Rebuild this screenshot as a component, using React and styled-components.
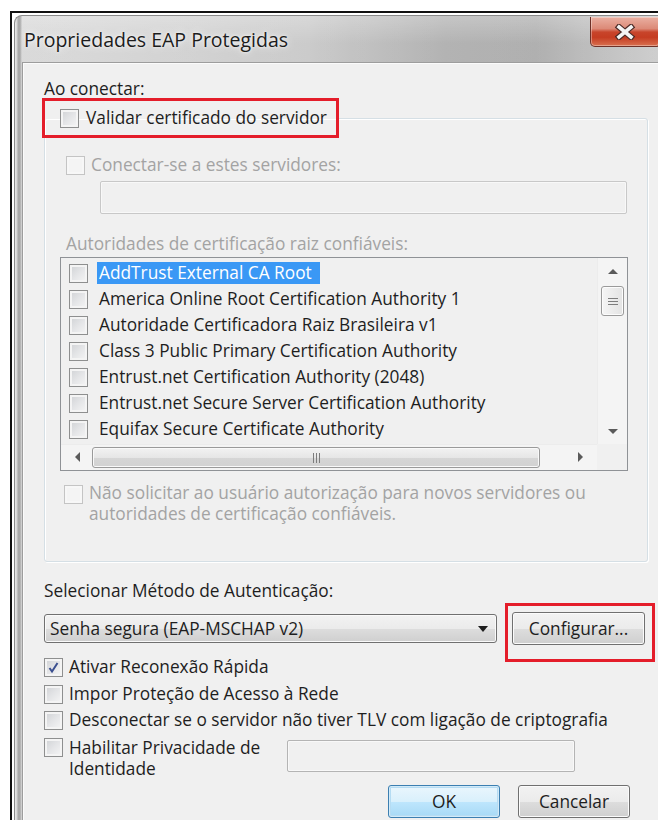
import React from 'react';
import styled, { createGlobalStyle } from 'styled-components';

const Global = createGlobalStyle`
  html, body { margin: 0; padding: 0; background: #fff; overflow: hidden; }
  * { box-sizing: border-box; }
`;

const FONT = `"Segoe UI", "Open Sans", "Noto Sans", sans-serif`;
const SIZE = '17.3px';

const Page = styled.div`
  width: 658px;
  height: 820px;
  overflow: hidden;
  background: #fff;
  padding: 11px 0 0 10px;
  font-family: ${FONT};
`;

const Frame = styled.div`
  width: 680px;
  height: 840px;
  border-left: 2px solid #111;
  border-top: 2px solid #111;
  padding: 2px 0 0 2px;
  background: #fff;
`;

const Window = styled.div`
  width: 652px;
  height: 830px;
  border-top-left-radius: 8px;
  border-left: 1px solid #8a8a8a;
  border-top: 1px solid #8a8a8a;
  padding-left: 7px;
  display: flex;
  flex-direction: column;
  background:
    linear-gradient(to right, rgba(255,255,255,0.5) 0px, rgba(255,255,255,0) 2px, rgba(0,0,0,0.2) 3px, rgba(0,0,0,0.2) 5px, rgba(255,255,255,0.15) 7px),
    linear-gradient(to right, #d4d4d4 0%, #cdcdcd 22%, #c2c2c2 45%, #a6a6a6 66%, #a2a2a2 80%, #bababa 92%, #c8c8c8 100%);
`;

const TitleBar = styled.div`
  height: 46px;
  display: flex;
  align-items: flex-start;
  padding-right: 6px;
  background: linear-gradient(to bottom, rgba(255,255,255,0.25), rgba(255,255,255,0) 60%);
`;

const Title = styled.div`
  margin: 12px 0 0 2px;
  font-size: 19.5px;
  line-height: 24px;
  color: #1c1c1c;
  text-shadow: 0 0 8px rgba(255,255,255,0.9), 0 0 3px rgba(255,255,255,0.9);
`;

const CloseButton = styled.div`
  margin: 1px 0 0 auto;
  width: 70px;
  height: 30px;
  border: 1px solid #6e3128;
  border-top: none;
  border-radius: 0 0 4px 5px;
  display: flex;
  align-items: center;
  justify-content: center;
  background: linear-gradient(to bottom, #eab0a2 0%, #dc8a78 40%, #c8442b 52%, #c53c22 70%, #d8704f 100%);
  box-shadow: inset 0 0 0 1px rgba(255,255,255,0.35);
`;

const Content = styled.div`
  flex: 1;
  background: #f0f0f0;
  border-top: 1px solid #9d9d9d;
  border-left: 1px solid #9d9d9d;
  box-shadow: inset 1px 1px 0 #fbfbfb;
  padding: 16px 0 0 21px;
  color: #1e1e1e;
  font-size: ${SIZE};
  display: flex;
  flex-direction: column;
  align-items: flex-start;
`;

const Label = styled.div`
  line-height: 20px;
  color: ${p => (p.$disabled ? '#a3a3a3' : '#1e1e1e')};
  margin: ${p => p.$m || '0'};
  white-space: nowrap;
`;

const Box = styled.span`
  flex: none;
  width: ${p => p.$size || 19}px;
  height: ${p => p.$size || 19}px;
  border: 1px solid ${p => (p.$disabled ? '#c4c4c4' : '#8e8f8f')};
  background: ${p =>
    p.$disabled
      ? '#f4f4f4'
      : 'linear-gradient(135deg, #cfd1d4 0%, #e4e5e7 50%, #f6f6f6 100%)'};
  box-shadow: inset 0 0 0 2px ${p => (p.$disabled ? '#f7f7f7' : '#f4f4f4')};
  display: flex;
  align-items: center;
  justify-content: center;
  margin-top: ${p => p.$top || 0}px;
`;

const Check = ({ checked, disabled, size, top }) => (
  <Box $disabled={disabled} $size={size} $top={top}>
    {checked && (
      <svg width="13" height="13" viewBox="0 0 13 13">
        <path d="M2.5 7 L5 10.5 L10.5 2" fill="none" stroke="#3b4f8f" strokeWidth="2" />
      </svg>
    )}
  </Box>
);

const Row = styled.div`
  display: flex;
  align-items: ${p => (p.$top ? 'flex-start' : 'center')};
  gap: ${p => p.$gap ?? 6}px;
  line-height: 20px;
  margin: ${p => p.$m || '0'};
  color: ${p => (p.$disabled ? '#a3a3a3' : '#1e1e1e')};
  white-space: nowrap;
`;

/* a label broken over two lines, each line its own block */
const Lines = styled.div`
  width: ${p => (p.$w ? `${p.$w}px` : 'auto')};
  flex: none;
  display: flex;
  flex-direction: column;
`;

const Line = styled.span`
  display: block;
  height: 21px;
  line-height: 21px;
`;

const Group = styled.fieldset`
  margin: -1px 0 0 0;
  width: 604px;
  height: 464px;
  padding: 0 0 0 15px;
  border: 1px solid #d5dfe5;
  border-radius: 3px;
  box-shadow: inset 1px 1px 0 #fff, 1px 1px 0 #fff;
  min-width: 0;
`;

const Legend = styled.legend`
  margin-left: -18px;
  height: 40px;
  padding: 0 9px 0 15px;
  border: 3px solid #e41d2a;
  display: flex;
  align-items: center;
  gap: 7px;
  color: #1e1e1e;
  font-size: ${SIZE};
  line-height: 20px;
  white-space: nowrap;
`;

const TextField = styled.div`
  flex: none;
  width: ${p => p.$w}px;
  height: ${p => p.$h}px;
  margin: ${p => p.$m || '0'};
  border: 1px solid ${p => (p.$dark ? '#b4b4b4' : '#c8c8c8')};
  border-radius: 2px;
  background: #f0f0f0;
  box-shadow: inset 0 0 0 1px #f8f8f8;
`;

const List = styled.div`
  margin-top: 3px;
  width: 568px;
  height: 214px;
  border: 1px solid #8f9296;
  background: #f0f0f0;
  display: grid;
  grid-template-columns: 1fr 30px;
  grid-template-rows: 1fr 26px;
`;

const Rows = styled.div`
  padding: 2px 0 0 8px;
  display: flex;
  flex-direction: column;
  overflow: hidden;
`;

const ListRow = styled.div`
  height: 26px;
  display: flex;
  align-items: center;
  gap: 9px;
  white-space: nowrap;
`;

const ItemText = styled.span`
  padding: 0 8px 0 2px;
  line-height: 22px;
  color: ${p => (p.$selected ? '#fff' : '#1e1e1e')};
  background: ${p => (p.$selected ? '#3a98f5' : 'transparent')};
`;

const VScroll = styled.div`
  background: #f4f4f4;
  border-left: 1px solid #ececec;
  display: flex;
  flex-direction: column;
  align-items: center;
  padding: 0 3px;
`;

const ArrowCell = styled.div`
  height: ${p => p.$h || 26}px;
  width: ${p => p.$w || 'auto'};
  flex: none;
  display: flex;
  align-items: center;
  justify-content: center;
  align-self: stretch;
`;

const VThumb = styled.div`
  align-self: stretch;
  height: 30px;
  margin-top: 2px;
  border: 1px solid #9a9a9a;
  border-radius: 3px;
  background: linear-gradient(to right, #f5f5f5, #e3e3e3);
  box-shadow: inset 0 0 0 1px #fcfcfc;
  display: flex;
  align-items: center;
  justify-content: center;
`;

const HScroll = styled.div`
  background: #f4f4f4;
  border-top: 1px solid #ececec;
  display: flex;
  align-items: center;
  padding: 0 0 0 6px;
`;

const HThumb = styled.div`
  width: 448px;
  height: 21px;
  margin-left: 5px;
  border: 1px solid #9a9a9a;
  border-radius: 3px;
  background: linear-gradient(to bottom, #f2f2f2 0%, #e6e6e6 50%, #d6d6d6 51%, #d2d2d2 100%);
  box-shadow: inset 0 0 0 1px #f9f9f9;
  display: flex;
  align-items: center;
  justify-content: center;
`;

const Corner = styled.div`
  background: #f0f0f0;
`;

const Combo = styled.div`
  width: 453px;
  height: 29px;
  border: 1px solid #707070;
  border-radius: 3px;
  background: linear-gradient(to bottom, #f2f2f2 0%, #ebebeb 50%, #dddddd 51%, #cfcfcf 100%);
  box-shadow: inset 0 0 0 1px #fafafa;
  display: flex;
  align-items: center;
  padding: 0 8px 0 5px;
  white-space: nowrap;
`;

const ComboArrow = styled.span`
  margin-left: auto;
  display: flex;
`;

const Button = styled.div`
  width: ${p => p.$w}px;
  height: 33px;
  border: 1px solid ${p => (p.$focus ? '#3c7fb1' : '#707070')};
  border-radius: 3px;
  display: flex;
  align-items: center;
  justify-content: center;
  color: #1e1e1e;
  background: ${p =>
    p.$focus
      ? 'linear-gradient(to bottom, #eaf6fd 0%, #d9f0fc 50%, #bee6fd 51%, #a7d9f5 100%)'
      : 'linear-gradient(to bottom, #f2f2f2 0%, #ebebeb 50%, #dddddd 51%, #cfcfcf 100%)'};
  box-shadow: inset 0 0 0 1px ${p => (p.$focus ? '#d2eaf8' : '#fbfbfb')}
    ${p => (p.$focus ? ', inset 0 0 0 2px #b5dcf3' : '')};
`;

const ComboRow = styled.div`
  display: flex;
  align-items: center;
  gap: 15px;
  margin-top: 11px;
`;

const Marked = styled.div`
  position: relative;
`;

const Marker = styled.div`
  position: absolute;
  left: -7px;
  top: -9px;
  right: -10px;
  bottom: -17px;
  border: 3px solid #e41d2a;
  pointer-events: none;
`;

const Footer = styled.div`
  width: 586px;
  display: flex;
  justify-content: flex-end;
  gap: 18px;
  margin-top: 6px;
`;

const Spacer = styled.div`
  flex: 1;
`;

const Tri = ({ dir }) => {
  const pts = {
    up: '0,5 5,0 10,5',
    down: '0,0 10,0 5,5',
    left: '5,0 5,10 0,5',
    right: '0,0 0,10 5,5',
  }[dir];
  const vertical = dir === 'up' || dir === 'down';
  return (
    <svg width={vertical ? 10 : 5} height={vertical ? 5 : 10} viewBox={vertical ? '0 0 10 5' : '0 0 5 10'}>
      <polygon points={pts} fill="#5a5a5a" />
    </svg>
  );
};

const authorities = [
  'AddTrust External CA Root',
  'America Online Root Certification Authority 1',
  'Autoridade Certificadora Raiz Brasileira v1',
  'Class 3 Public Primary Certification Authority',
  'Entrust.net Certification Authority (2048)',
  'Entrust.net Secure Server Certification Authority',
  'Equifax Secure Certificate Authority',
];

export default function App() {
  return (
    <Page>
      <Global />
      <Frame>
        <Window>
          <TitleBar>
            <Title>Propriedades EAP Protegidas</Title>
            <CloseButton>
              <svg width="22" height="16" viewBox="0 0 22 16">
                <path d="M5 3 L17 13 M17 3 L5 13" stroke="#4b2a26" strokeWidth="6" strokeLinecap="square" />
                <path d="M5 3 L17 13 M17 3 L5 13" stroke="#f4f4f4" strokeWidth="3.6" strokeLinecap="square" />
              </svg>
            </CloseButton>
          </TitleBar>

          <Content>
            <Label>Ao conectar:</Label>

            <Group>
              <Legend>
                <Check />
                Validar certificado do servidor
              </Legend>

              <Row $disabled $m="17px 0 0 6px">
                <Check disabled />
                Conectar-se a estes servidores:
              </Row>
              <TextField $w={527} $h={33} $m="6px 0 0 40px" />

              <Label $disabled $m="20px 0 0 6px">Autoridades de certificação raiz confiáveis:</Label>
              <List>
                <Rows>
                  {authorities.map((name, i) => (
                    <ListRow key={name}>
                      <Check />
                      <ItemText $selected={i === 0}>{name}</ItemText>
                    </ListRow>
                  ))}
                </Rows>
                <VScroll>
                  <ArrowCell $h={26}><Tri dir="up" /></ArrowCell>
                  <VThumb>
                    <svg width="10" height="9" viewBox="0 0 10 9">
                      <path d="M0 1.5 H10 M0 4.5 H10 M0 7.5 H10" stroke="#7d7d7d" strokeWidth="1" />
                    </svg>
                  </VThumb>
                  <Spacer />
                  <ArrowCell $h={26}><Tri dir="down" /></ArrowCell>
                </VScroll>
                <HScroll>
                  <ArrowCell $h={24} $w="20px"><Tri dir="left" /></ArrowCell>
                  <HThumb>
                    <svg width="9" height="10" viewBox="0 0 9 10">
                      <path d="M1.5 0 V10 M4.5 0 V10 M7.5 0 V10" stroke="#7d7d7d" strokeWidth="1" />
                    </svg>
                  </HThumb>
                  <Spacer />
                  <ArrowCell $h={24} $w="34px"><Tri dir="right" /></ArrowCell>
                </HScroll>
                <Corner />
              </List>

              <Row $top $disabled $m="11px 0 0 4px">
                <Check disabled top={3} />
                <Lines>
                  <Line>Não solicitar ao usuário autorização para novos servidores ou</Line>
                  <Line>autoridades de certificação confiáveis.</Line>
                </Lines>
              </Row>
            </Group>

            <Label $m="19px 0 0 0">Selecionar Método de Autenticação:</Label>
            <ComboRow>
              <Combo>
                <span>Senha segura (EAP-MSCHAP v2)</span>
                <ComboArrow>
                  <svg width="10" height="6" viewBox="0 0 10 6"><polygon points="0,0 10,0 5,6" fill="#1e1e1e" /></svg>
                </ComboArrow>
              </Combo>
              <Marked>
                <Button $w={133}>Configurar...</Button>
                <Marker />
              </Marked>
            </ComboRow>

            <Row $m="12px 0 0 0">
              <Check checked />
              Ativar Reconexão Rápida
            </Row>
            <Row $m="7px 0 0 0">
              <Check />
              Impor Proteção de Acesso à Rede
            </Row>
            <Row $m="6px 0 0 0">
              <Check />
              Desconectar se o servidor não tiver TLV com ligação de criptografia
            </Row>
            <Row $top $m="7px 0 0 0" $gap={6}>
              <Check top={1} />
              <Lines $w={212}>
                <Line>Habilitar Privacidade de</Line>
                <Line>Identidade</Line>
              </Lines>
              <TextField $dark $w={288} $h={32} $m="3px 0 0 0" />
            </Row>

            <Footer>
              <Button $w={112} $focus>OK</Button>
              <Button $w={112}>Cancelar</Button>
            </Footer>
          </Content>
        </Window>
      </Frame>
    </Page>
  );
}
